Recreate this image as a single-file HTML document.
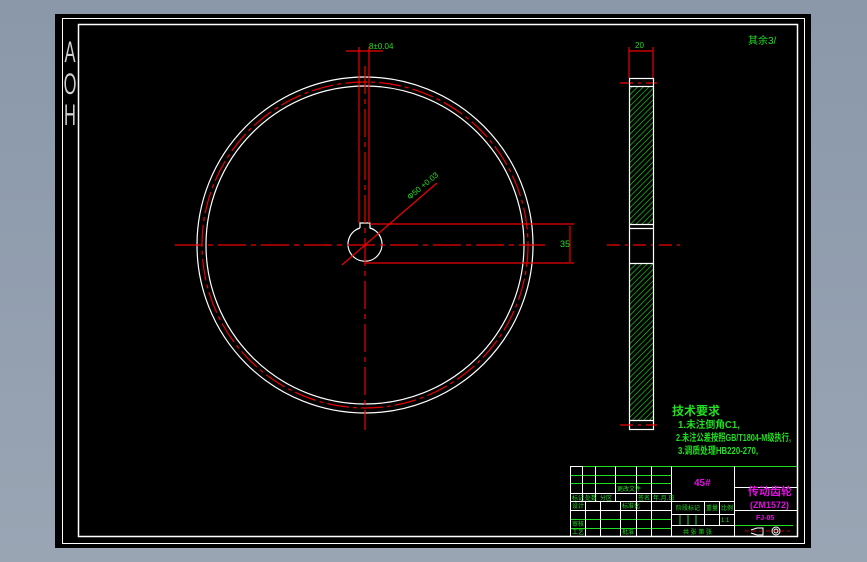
<!DOCTYPE html>
<html><head><meta charset="utf-8"><style>
html,body{margin:0;padding:0;width:867px;height:562px;overflow:hidden;background:#8c9aac}
svg{display:block}
text{font-family:"Liberation Sans","Noto Sans CJK SC",sans-serif}
</style></head><body>
<svg width="867" height="562" viewBox="0 0 867 562" xmlns="http://www.w3.org/2000/svg">
<defs>
<linearGradient id="bg" x1="0" y1="0" x2="0" y2="1"><stop offset="0" stop-color="#8a98aa"/><stop offset="1" stop-color="#9aa5b4"/></linearGradient>
<pattern id="h" width="4" height="4" patternUnits="userSpaceOnUse" patternTransform="rotate(45)"><line x1="0" y1="0" x2="0" y2="4" stroke="#1fd21f" stroke-width="1.3"/></pattern>
</defs>
<rect width="867" height="562" fill="url(#bg)"/>
<rect x="55" y="14" width="756" height="534" fill="#000"/>
<rect x="62.5" y="18.5" width="742" height="525" fill="none" stroke="#fff" stroke-width="1"/>
<rect x="78.5" y="24.5" width="719" height="512" fill="none" stroke="#fff" stroke-width="1.5"/>
<g fill="#cfcfcf" font-family="Liberation Serif,serif" font-size="30" text-anchor="middle">
<text x="70" y="62" transform="translate(70,0) scale(0.55,1) translate(-70,0)">A</text>
<text x="70" y="94" transform="translate(70,0) scale(0.55,1) translate(-70,0)">O</text>
<text x="70" y="125" transform="translate(70,0) scale(0.55,1) translate(-70,0)">H</text>
</g>
<g fill="none" stroke="#fff" stroke-width="1.2">
<circle cx="365" cy="245" r="168"/>
<circle cx="365" cy="245" r="159"/>
<path d="M360 228 L360 223 L370 223 L370 228 A17 17 0 1 1 360 228"/>
</g>
<circle cx="365" cy="245" r="163" fill="none" stroke="#e00" stroke-width="1.2" stroke-dasharray="22 4 4 4"/>
<g stroke="#e00" stroke-width="1.2" fill="none">
<line x1="175" y1="245" x2="545" y2="245" stroke-dasharray="28 5 5 5"/>
<line x1="365" y1="66" x2="365" y2="430" stroke-dasharray="28 5 5 5"/>
<line x1="359" y1="47" x2="359" y2="223"/>
<line x1="369" y1="47" x2="369" y2="223"/>
<line x1="346" y1="51" x2="383" y2="51"/>
<line x1="370" y1="224" x2="574" y2="224"/>
<line x1="365" y1="263" x2="574" y2="263"/>
<line x1="570" y1="226" x2="570" y2="262"/>
<line x1="342" y1="265" x2="437" y2="183"/>
<line x1="607" y1="245" x2="680" y2="245" stroke-dasharray="13 5 3 5"/>
<line x1="620" y1="83" x2="657" y2="83" stroke-dasharray="13 5 3 5"/>
<line x1="629" y1="47" x2="629" y2="78"/>
<line x1="653" y1="47" x2="653" y2="78"/>
<line x1="629" y1="51" x2="653" y2="51"/>
</g>
<g fill="#1fe01f" font-size="8">
<text x="369" y="49">8±0.04</text>
<text x="635" y="48">20</text>
<text x="560" y="247" font-size="9">35</text>
<text x="410" y="200" transform="rotate(-40 410 200)">Φ50 +0.03</text>
<text x="748" y="44" font-size="10">其余3/</text>
</g>
<rect x="629" y="87" width="24" height="137" fill="url(#h)"/>
<rect x="629" y="263" width="24" height="157" fill="url(#h)"/>
<g fill="none" stroke="#fff" stroke-width="1.2">
<rect x="629.5" y="78.5" width="24" height="351"/>
<line x1="629" y1="86.5" x2="653" y2="86.5"/>
<line x1="629" y1="224.5" x2="653" y2="224.5"/>
<line x1="629" y1="228.5" x2="653" y2="228.5"/>
<line x1="629" y1="263.5" x2="653" y2="263.5"/>
<line x1="629" y1="420.5" x2="653" y2="420.5"/>
</g>
<line x1="620" y1="425" x2="657" y2="425" stroke="#e00" stroke-width="1.2" stroke-dasharray="13 5 3 5"/>
<g fill="#1fe01f" font-size="10" font-weight="bold">
<text x="672" y="415" font-size="12">技术要求</text>
<text x="678" y="428" textLength="62" lengthAdjust="spacingAndGlyphs">1.未注倒角C1,</text>
<text x="676" y="441" textLength="115" lengthAdjust="spacingAndGlyphs">2.未注公差按照GB/T1804-M级执行,</text>
<text x="678" y="454" textLength="80" lengthAdjust="spacingAndGlyphs">3.调质处理HB220-270,</text>
</g>
<g stroke="#1fe01f" stroke-width="1">
<line x1="582" y1="466.5" x2="797" y2="466.5"/>
<line x1="570" y1="475.5" x2="671" y2="475.5"/>
<line x1="570" y1="483.5" x2="671" y2="483.5"/>
<line x1="570" y1="519.5" x2="671" y2="519.5"/>
<line x1="570" y1="528.5" x2="671" y2="528.5"/>
<line x1="734" y1="525.5" x2="793" y2="525.5"/>
<line x1="680" y1="514" x2="680" y2="525"/>
<line x1="688" y1="514" x2="688" y2="525"/>
<line x1="696" y1="514" x2="696" y2="525"/>
</g>
<g stroke="#fff" stroke-width="1" fill="none">
<line x1="570.5" y1="466" x2="570.5" y2="537"/>
<line x1="570" y1="466.5" x2="582" y2="466.5"/>
<line x1="582.5" y1="466" x2="582.5" y2="501"/>
<line x1="595.5" y1="466" x2="595.5" y2="501"/>
<line x1="615.5" y1="466" x2="615.5" y2="501"/>
<line x1="636.5" y1="466" x2="636.5" y2="537"/>
<line x1="651.5" y1="466" x2="651.5" y2="537"/>
<line x1="671.5" y1="466" x2="671.5" y2="537"/>
<line x1="734.5" y1="466" x2="734.5" y2="537"/>
<line x1="585.5" y1="501" x2="585.5" y2="537"/>
<line x1="600.5" y1="501" x2="600.5" y2="537"/>
<line x1="620.5" y1="501" x2="620.5" y2="537"/>
<line x1="570" y1="493.5" x2="671" y2="493.5"/>
<line x1="570" y1="501.5" x2="734" y2="501.5"/>
<line x1="570" y1="510.5" x2="671" y2="510.5"/>
<line x1="671" y1="514.5" x2="734" y2="514.5"/>
<line x1="671" y1="525.5" x2="734" y2="525.5"/>
<line x1="704.5" y1="501" x2="704.5" y2="525"/>
<line x1="719.5" y1="501" x2="719.5" y2="525"/>
<line x1="734" y1="487.5" x2="797" y2="487.5"/>
<line x1="734" y1="510.5" x2="797" y2="510.5"/>
</g>
<g fill="#1fe01f" font-size="6">
<text x="572" y="500">标记</text><text x="585" y="500">处数</text><text x="600" y="500">分区</text><text x="617" y="491">更改文件</text><text x="638" y="500">签名</text><text x="653" y="500">年.月.日</text>
<text x="572" y="508">设计</text><text x="622" y="508">标准化</text>
<text x="572" y="526">审核</text><text x="572" y="534">工艺</text><text x="622" y="534">批准</text>
<text x="676" y="510">阶段标记</text><text x="706" y="510">重量</text><text x="721" y="510">比例</text>
<text x="721" y="522">1:1</text>
<text x="683" y="534">共 张 第 张</text>
</g>
<g fill="#e010e0" font-weight="bold">
<text x="694" y="486" font-size="10">45#</text>
<text x="748" y="495" font-size="11">传动齿轮</text>
<text x="750" y="508" font-size="9">(ZM1572)</text>
<text x="756" y="520" font-size="7">FJ-05</text>
</g>
<g stroke="#fff" fill="none" stroke-width="1">
<path d="M751 530 L757 528 L763 528 L763 535 L757 535 L751 533"/>
<circle cx="776" cy="531" r="4"/><circle cx="776" cy="531" r="2"/>
</g>
<line x1="745" y1="531" x2="790" y2="531" stroke="#e00" stroke-width="0.8" stroke-dasharray="4 3"/>
</svg>
</body></html>
